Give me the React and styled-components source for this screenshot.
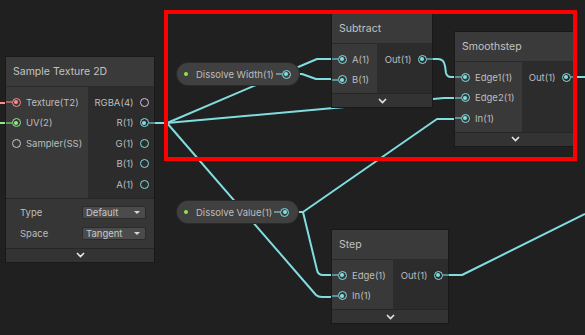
import React from 'react';
import styled, { createGlobalStyle } from 'styled-components';

const FLOAT = '#80dde0';

const Global = createGlobalStyle`
  html, body { margin: 0; padding: 0; background: #202020; }
  body { font-family: 'Inter', 'Noto Sans', sans-serif; }
`;

const Canvas = styled.div`
  position: relative;
  width: 585px;
  height: 335px;
  background: #202020;
  overflow: hidden;
`;

const Wires = styled.svg`
  position: absolute;
  left: 0;
  top: 0;
  width: 585px;
  height: 335px;
`;

// nodes sit on a free graph canvas, so they are placed by coordinates
const Node = styled.div`
  position: absolute;
  left: ${p => p.$x}px;
  top: ${p => p.$y}px;
  width: ${p => p.$w}px;
  display: flex;
  flex-direction: column;
  background: #2d2d2d;
  box-shadow: 0 0 0 1px #191919;
`;

const Header = styled.div`
  height: 30px;
  display: flex;
  align-items: center;
  padding-left: 7px;
  background: #3a3a3a;
  color: #c2c2c2;
  font-size: 10.5px;
  border-bottom: 1px solid #2a2a2a;
  box-sizing: border-box;
`;

const Body = styled.div`
  display: flex;
`;

const Inputs = styled.div`
  width: ${p => p.$w}px;
  background: #393939;
  padding: 5px 0 3px;
`;

const Outputs = styled.div`
  flex: 1;
  background: #2c2c2c;
  padding: 5px 0 3px;
`;

const Row = styled.div`
  height: 20.5px;
  display: flex;
  align-items: center;
  justify-content: ${p => (p.$out ? 'flex-end' : 'flex-start')};
  gap: ${p => (p.$out ? 6 : 5.5)}px;
  padding: ${p => (p.$out ? '0 5.5px 0 0' : '0 0 0 5.5px')};
  color: #bdbdbd;
  font-size: 9.5px;
  white-space: nowrap;
`;

const Port = styled.span`
  position: relative;
  flex-shrink: 0;
  width: 9px;
  height: 9px;
  box-sizing: border-box;
  border: 1.2px solid ${p => p.$c};
  border-radius: 50%;

  &::after {
    content: '';
    position: absolute;
    left: 1.3px;
    top: 1.3px;
    width: 4px;
    height: 4px;
    border-radius: 50%;
    background: ${p => (p.$on ? p.$c : 'transparent')};
  }

  &::before {
    content: '';
    display: ${p => (p.$on ? 'block' : 'none')};
    position: absolute;
    top: 2.3px;
    ${p => (p.$out ? 'left: 8px;' : 'right: 8px;')}
    width: 6px;
    height: 2px;
    background: ${p => p.$c};
    opacity: 0.55;
  }
`;

const Props = styled.div`
  display: flex;
  flex-direction: column;
  padding: 3px 8px 4px 14px;
  background: #363636;
  border-top: 1px solid #262626;
`;

const PropRow = styled.div`
  height: 21px;
  display: flex;
  align-items: center;
  justify-content: space-between;
  color: #bdbdbd;
  font-size: 9.5px;
`;

const Dropdown = styled.div`
  width: 64px;
  height: 13px;
  box-sizing: border-box;
  display: flex;
  align-items: center;
  justify-content: space-between;
  padding: 0 5px 0 3px;
  background: #4b4b4b;
  border: 1px solid #2b2b2b;
  border-radius: 2px;
  color: #c8c8c8;
  font-size: 9.5px;
`;

const Caret = styled.span`
  width: 0;
  height: 0;
  border-left: 3px solid transparent;
  border-right: 3px solid transparent;
  border-top: 3px solid #d8d8d8;
`;

const Foot = styled.div`
  height: 14px;
  display: flex;
  align-items: center;
  justify-content: center;
  background: #333333;
  border-top: 1px solid #262626;
  box-sizing: border-box;
`;

const Pill = styled.div`
  position: absolute;
  left: ${p => p.$x}px;
  top: ${p => p.$y}px;
  width: ${p => p.$w}px;
  height: 22px;
  box-sizing: border-box;
  display: flex;
  align-items: center;
  gap: 8px;
  padding: 0 11.5px 0 7px;
  border-radius: 11px;
  background: #404040;
  box-shadow: 0 0 0 1px #2a2a2a;
  color: #bdbdbd;
  font-size: 9.5px;
  white-space: nowrap;

  & > ${Port} {
    margin-left: auto;
  }
`;

const Exposed = styled.span`
  width: 4px;
  height: 4px;
  border-radius: 50%;
  background: #92e24c;
  flex-shrink: 0;
`;

const Highlight = styled.div`
  position: absolute;
  left: 164px;
  top: 10px;
  width: 413px;
  height: 151px;
  box-sizing: border-box;
  border: 4px solid #ff0000;
  pointer-events: none;
`;

const Chevron = () => (
  <svg width="9" height="6" viewBox="0 0 9 6">
    <polyline points="1,1 4.5,4.5 8,1" fill="none" stroke="#e6e6e6" strokeWidth="1.6" />
  </svg>
);

const In = ({ c = FLOAT, on, children }) => (
  <Row>
    <Port $c={c} $on={on} />
    {children}
  </Row>
);

const Out = ({ c = FLOAT, on, children }) => (
  <Row $out>
    {children}
    <Port $c={c} $on={on} $out />
  </Row>
);

const wires = [
  { c: '#ff8b8b', d: 'M0,103 H6' },
  { c: '#8fe88a', d: 'M0,123 H6' },
  { c: FLOAT, d: 'M154,123 H167 L317,59 H332' },
  { c: FLOAT, d: 'M154,123 H167 L444,98 H455' },
  { c: FLOAT, d: 'M154,123 H167 L316,295 Q318,297 322,297 H332' },
  { c: FLOAT, d: 'M298,74 H302 L316,79 H332' },
  { c: FLOAT, d: 'M432,59 H438 Q444,59 445,66 L446,73 Q447,77 451,77 H455' },
  { c: FLOAT, d: 'M297,212 H303 L437,119 H455' },
  { c: FLOAT, d: 'M297,212 H303 L317,270 Q318,275 323,275 H332' },
  { c: FLOAT, d: 'M576,77 H585' },
  { c: FLOAT, d: 'M448,275 H462 L585,214' },
];

export default function App() {
  return (
    <>
      <Global />
      <Canvas>
        <Wires viewBox="0 0 585 335">
          {wires.map((w, i) => (
            <path key={i} d={w.d} fill="none" stroke={w.c} strokeWidth="2" strokeLinejoin="round" />
          ))}
        </Wires>

        <Node $x={6} $y={57} $w={148}>
          <Header>Sample Texture 2D</Header>
          <Body>
            <Inputs $w={82}>
              <In c="#ff8b8b" on>Texture(T2)</In>
              <In c="#8fe88a" on>UV(2)</In>
              <In c="#c9c9c9">Sampler(SS)</In>
            </Inputs>
            <Outputs>
              <Out c="#e4b6ea">RGBA(4)</Out>
              <Out on>R(1)</Out>
              <Out>G(1)</Out>
              <Out>B(1)</Out>
              <Out>A(1)</Out>
            </Outputs>
          </Body>
          <Props>
            <PropRow>
              Type
              <Dropdown>Default<Caret /></Dropdown>
            </PropRow>
            <PropRow>
              Space
              <Dropdown>Tangent<Caret /></Dropdown>
            </PropRow>
          </Props>
          <Foot><Chevron /></Foot>
        </Node>

        <Pill $x={177} $y={63} $w={122}>
          <Exposed />
          Dissolve Width(1)
          <Port $c={FLOAT} $on />
        </Pill>

        <Pill $x={177} $y={201} $w={121}>
          <Exposed />
          Dissolve Value(1)
          <Port $c={FLOAT} $on />
        </Pill>

        <Node $x={332} $y={14} $w={100}>
          <Header>Subtract</Header>
          <Body>
            <Inputs $w={45}>
              <In on>A(1)</In>
              <In on>B(1)</In>
            </Inputs>
            <Outputs>
              <Out on>Out(1)</Out>
            </Outputs>
          </Body>
          <Foot><Chevron /></Foot>
        </Node>

        <Node $x={455} $y={32} $w={121}>
          <Header>Smoothstep</Header>
          <Body>
            <Inputs $w={67}>
              <In on>Edge1(1)</In>
              <In on>Edge2(1)</In>
              <In on>In(1)</In>
            </Inputs>
            <Outputs>
              <Out on>Out(1)</Out>
            </Outputs>
          </Body>
          <Foot><Chevron /></Foot>
        </Node>

        <Node $x={332} $y={230} $w={116}>
          <Header>Step</Header>
          <Body>
            <Inputs $w={61}>
              <In on>Edge(1)</In>
              <In on>In(1)</In>
            </Inputs>
            <Outputs>
              <Out on>Out(1)</Out>
            </Outputs>
          </Body>
          <Foot><Chevron /></Foot>
        </Node>

        <Highlight />
      </Canvas>
    </>
  );
}
